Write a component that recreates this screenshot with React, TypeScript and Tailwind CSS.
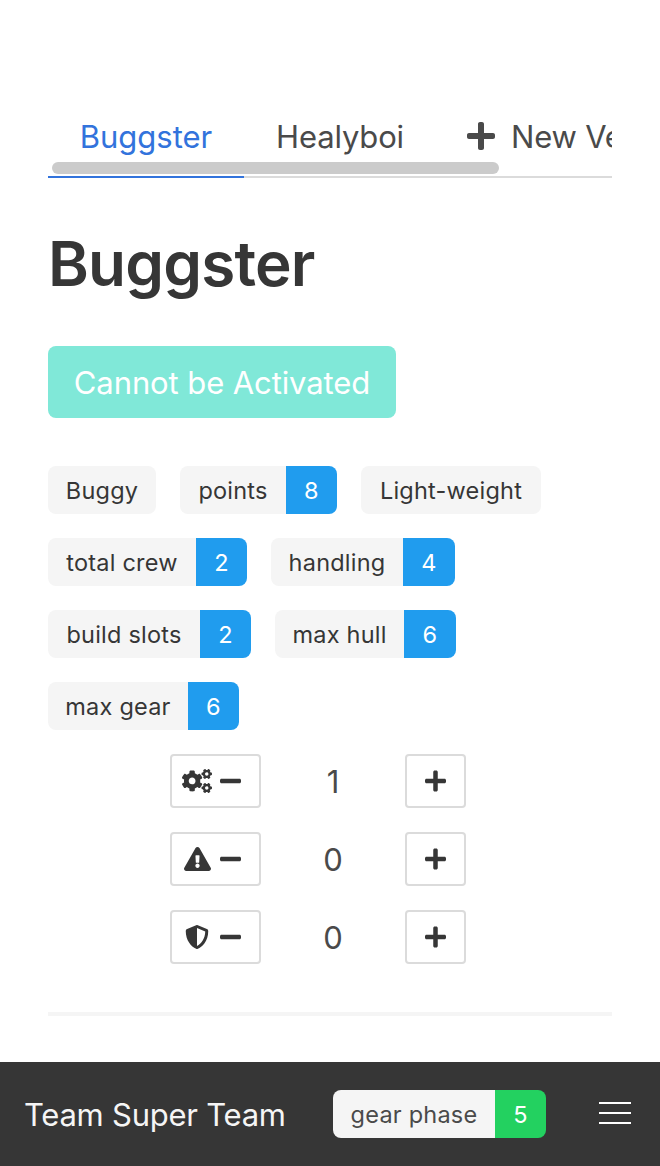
import type { ReactNode } from "react";
import { FaCogs, FaExclamationTriangle, FaMinus, FaPlus, FaShieldAlt } from "react-icons/fa";

type TagProps = {
  label: string;
  labelWidth: string;
  value?: string;
  valueWidth?: string;
  valueColor?: string;
  textColor?: string;
};

function Tag({ label, labelWidth, value, valueWidth = "w-[51px]", valueColor = "bg-[#209cee]", textColor = "text-[#363636]" }: TagProps) {
  return (
    <div className="flex h-12 overflow-hidden rounded-lg text-[23.5px] leading-[50px] tracking-[0.22px] whitespace-nowrap">
      <span className={`${labelWidth} ${textColor} flex justify-center bg-[#f5f5f5]`}>{label}</span>
      {value && <span className={`${valueWidth} ${valueColor} flex justify-center text-white`}>{value}</span>}
    </div>
  );
}

function Counter({ icon, value }: { icon: ReactNode; value: number }) {
  return (
    <div className="flex h-[54px] items-center text-2xl text-[#363636]">
      <button className="flex h-[54px] w-[91px] items-center rounded border-2 border-[#dbdbdb] pl-[10px]">
        <span className="flex w-[30px] justify-center">{icon}</span>
        <FaMinus className="ml-2 h-6 w-[21px]" />
      </button>
      <span className="h-[54px] w-[144px] text-center text-[31px] leading-[55px] text-[#4a4a4a]">{value}</span>
      <button className="flex h-[54px] w-[61px] items-center justify-center rounded border-2 border-[#dbdbdb]">
        <FaPlus className="h-6 w-[21px]" />
      </button>
    </div>
  );
}

export default function App() {
  return (
    <div className="flex h-[1166px] w-[660px] flex-col overflow-hidden bg-white font-['Inter',sans-serif] text-[31px] text-[#4a4a4a]">
      <main className="flex flex-1 flex-col px-12 pt-24">
        <nav className="relative h-[82px] shrink-0 overflow-hidden">
          <div className="flex h-full w-[800px] leading-[81px]">
            <a className="flex w-[196px] justify-center border-b-2 border-[#3273dc] text-[#3273dc]">Buggster</a>
            <a className="flex w-[192px] justify-center border-b-2 border-[#dbdbdb]">
              <span className="tracking-[-0.15px]">Healyboi</span>
            </a>
            <a className="flex flex-1 border-b-2 border-[#dbdbdb] pl-[29px]">
              <FaPlus className="mt-6" size={32} />
              <span className="ml-[14px] tracking-[-0.2px] whitespace-nowrap">New Vehicle</span>
            </a>
          </div>
          <div className="absolute top-[66px] left-1 h-3 w-[447px] rounded-full bg-[#cbcbcb]" />
        </nav>

        <h1 className="mt-12 h-[72px] text-[62px] leading-[76px] font-semibold tracking-[-0.8px] text-[#363636]">Buggster</h1>

        <button className="mt-12 flex h-[72px] w-[348px] shrink-0 justify-center rounded-lg bg-[#80e8d8] leading-[74px] tracking-[-0.1px] whitespace-nowrap text-white">
          Cannot be Activated
        </button>

        <section className="mt-12 flex flex-wrap gap-6">
          <Tag label="Buggy" labelWidth="w-[108px]" />
          <Tag label="points" labelWidth="w-[106px]" value="8" />
          <Tag label="Light-weight" labelWidth="w-[180px]" />
          <Tag label="total crew" labelWidth="w-[148px]" value="2" />
          <Tag label="handling" labelWidth="w-[132px]" value="4" valueWidth="w-[52px]" />
          <div className="w-20" />
          <Tag label="build slots" labelWidth="w-[152px]" value="2" />
          <Tag label="max hull" labelWidth="w-[129px]" value="6" valueWidth="w-[52px]" />
          <div className="w-20" />
          <Tag label="max gear" labelWidth="w-[140px]" value="6" />
        </section>

        <section className="mt-6 flex flex-col gap-6 pl-[122px]">
          <Counter icon={<FaCogs className="h-6 w-[30px]" />} value={1} />
          <Counter icon={<FaExclamationTriangle className="h-6 w-[27px]" />} value={0} />
          <Counter icon={<FaShieldAlt className="h-6 w-6" />} value={0} />
        </section>
        <hr className="mt-12 h-1 border-0 bg-[#f5f5f5]" />
      </main>

      <footer className="flex h-[104px] shrink-0 items-center bg-[#363636] pl-6 text-[#f5f5f5]">
        <span className="h-[104px] w-[309px] leading-[105px] tracking-[-0.25px] whitespace-nowrap">Team Super Team</span>
        <Tag label="gear phase" labelWidth="w-[162px]" value="5" valueColor="bg-[#23d160]" textColor="text-[#4a4a4a]" />
        <button aria-label="Menu" className="ml-[53px] flex w-8 flex-col gap-2 pb-[3px]">
          <span className="h-0.5 w-full bg-white" />
          <span className="h-0.5 w-full bg-white" />
          <span className="h-0.5 w-full bg-white" />
        </button>
      </footer>
    </div>
  );
}
